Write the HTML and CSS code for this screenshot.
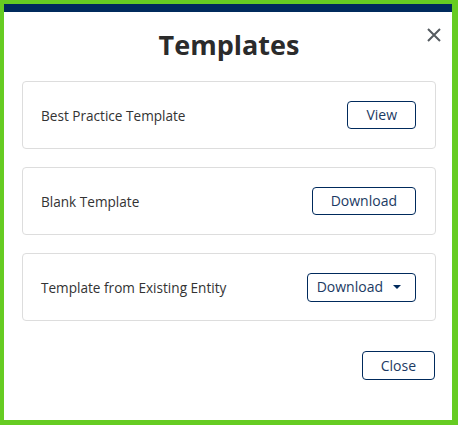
FILE: index.html
```html
<!DOCTYPE html>
<html lang="en">
<head>
    <meta charset="UTF-8">
    <meta name="viewport" content="width=device-width, initial-scale=1.0">
    <title>Templates</title>
    <link rel="stylesheet" href="styles.css">
</head>
<body>
    <div class="frame">
        <div class="modal">
            <button class="close-x" aria-label="Close">
                <svg width="14" height="14" viewBox="0 0 14 14">
                    <path d="M1 1 L13 13 M13 1 L1 13" stroke="#555b60" stroke-width="2" fill="none"/>
                </svg>
            </button>

            <h1>Templates</h1>

            <div class="cards">
                <div class="card">
                    <span class="card-label">Best Practice Template</span>
                    <button class="btn">View</button>
                </div>
                <div class="card">
                    <span class="card-label">Blank Template</span>
                    <button class="btn">Download</button>
                </div>
                <div class="card">
                    <span class="card-label">Template from Existing Entity</span>
                    <button class="btn btn-dropdown">
                        Download
                        <span class="caret"></span>
                    </button>
                </div>
            </div>

            <div class="footer">
                <button class="btn btn-close">Close</button>
            </div>
        </div>
    </div>
</body>
</html>
```

FILE: styles.css
```css
* {
    margin: 0;
    padding: 0;
    box-sizing: border-box;
}

body {
    font-family: 'Open Sans', 'Liberation Sans', sans-serif;
    background: #66cc22;
}

.frame {
    height: 425px;
    padding: 4px 6px 5px 4px;
}

.modal {
    position: relative;
    height: 100%;
    background: white;
    border-top: 8px solid #002a5c;
    padding: 14px 16px 0 18px;
}

.close-x {
    position: absolute;
    top: 16px;
    right: 11px;
    background: none;
    border: none;
    line-height: 0;
    cursor: pointer;
}

h1 {
    text-align: center;
    color: #2b2b2b;
    font-size: 27px;
    line-height: 38px;
    font-weight: bold;
    margin-bottom: 17px;
}

.cards {
    display: flex;
    flex-direction: column;
    gap: 18px;
}

.card {
    height: 68px;
    border: 1px solid #dddddd;
    border-radius: 4px;
    display: flex;
    align-items: center;
    justify-content: space-between;
    padding: 0 19px 0 18px;
}

.card-label {
    color: #333;
    font-size: 13.6px;
}

.btn {
    font-family: inherit;
    font-size: 14px;
    line-height: 20px;
    height: 28px;
    padding: 3px 18px;
    color: #1b3a63;
    background: white;
    border: 1px solid #002a5c;
    border-radius: 4px;
    cursor: pointer;
}

.btn-dropdown {
    display: flex;
    align-items: center;
    gap: 10px;
    padding: 3px 14px 3px 9px;
    height: 29px;
}

.caret {
    width: 0;
    height: 0;
    border-left: 4px solid transparent;
    border-right: 4px solid transparent;
    border-top: 4px solid #002a5c;
}

.footer {
    display: flex;
    justify-content: flex-end;
    margin-top: 30px;
    padding-right: 1px;
}

.btn-close {
    height: 29px;
}
```
